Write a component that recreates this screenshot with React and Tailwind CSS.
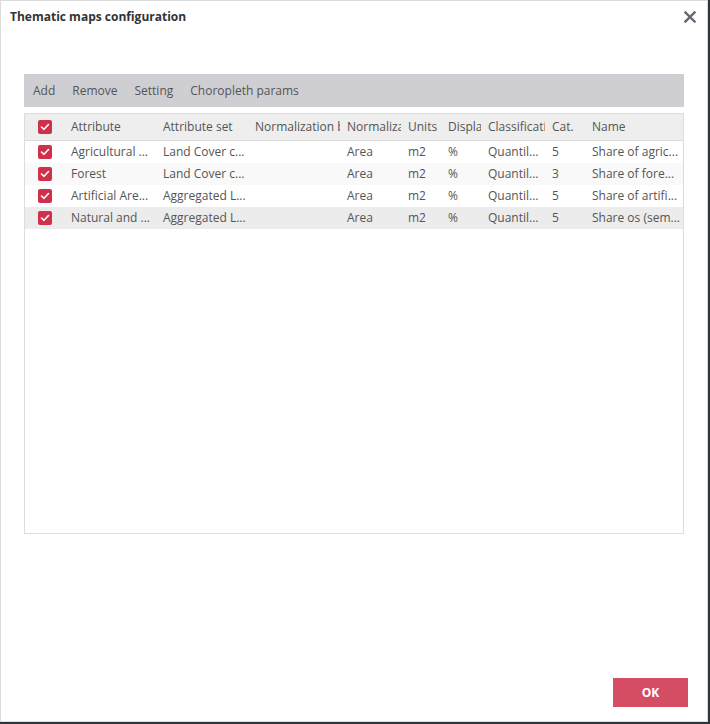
import React from "react";

const cols = [
  { label: "Attribute", w: "w-[92px]" },
  { label: "Attribute set", w: "w-[92px]" },
  { label: "Normalization by", w: "w-[92px]" },
  { label: "Normalization", w: "w-[61px]" },
  { label: "Units", w: "w-[40px]" },
  { label: "Display", w: "w-[40px]" },
  { label: "Classification", w: "w-[64px]" },
  { label: "Cat.", w: "w-[40px]" },
  { label: "Name", w: "w-[100px]" },
];

const rowBg = ["bg-white", "bg-[#f9f9f9]", "bg-white", "bg-[#ececec]"];

const disp = [
  ["Agricultural ...", "Land Cover c...", "", "Area", "m2", "%", "Quantil...", "5", "Share of agric..."],
  ["Forest", "Land Cover c...", "", "Area", "m2", "%", "Quantil...", "3", "Share of fore..."],
  ["Artificial Are...", "Aggregated L...", "", "Area", "m2", "%", "Quantil...", "5", "Share of artifi..."],
  ["Natural and ...", "Aggregated L...", "", "Area", "m2", "%", "Quantil...", "5", "Share os (sem..."],
];

function Check() {
  return (
    <div className="w-[39px] flex items-center justify-center shrink-0">
      <div className="w-[14px] h-[14px] rounded-[2px] bg-[#d0304a] flex items-center justify-center">
        <svg width="10" height="8" viewBox="0 0 10 8" fill="none">
          <path d="M1.5 4 L4 6.3 L8.5 1.5" stroke="white" strokeWidth="1.6" strokeLinecap="round" strokeLinejoin="round" />
        </svg>
      </div>
    </div>
  );
}

export default function App() {
  return (
    <div className="w-[710px] h-[724px] bg-[#2f3438] overflow-hidden" style={{ fontFamily: '"Open Sans", sans-serif' }}>
      <div className="w-[708px] h-[722px] bg-white border border-[#dcdcdc] flex flex-col">
        <div className="h-[32px] flex items-center justify-between pl-[9px] pr-[11px] shrink-0">
          <span className="text-[12px] font-bold text-[#333] leading-none">Thematic maps configuration</span>
          <svg width="12" height="12" viewBox="0 0 12 12">
            <path d="M1.5 1.5 L10.5 10.5 M10.5 1.5 L1.5 10.5" stroke="#666672" strokeWidth="2.4" strokeLinecap="square" />
          </svg>
        </div>
        <div className="flex-1 flex flex-col px-[23px] pt-[41px]">
          <div className="h-[33px] bg-[#cfcfd3] flex items-center gap-[17px] px-[9px] text-[12px] text-[#555] shrink-0">
            <span>Add</span>
            <span>Remove</span>
            <span>Setting</span>
            <span>Choropleth params</span>
          </div>
          <div className="mt-[6px] h-[421px] border border-[#dcdcdc] flex flex-col overflow-hidden">
            <div className="h-[27px] bg-[#eeeeee] border-b border-[#dcdcdc] flex items-center shrink-0">
              <Check />
              {cols.map((c, i) => (
                <div key={i} className={`${c.w} shrink-0 pl-[7px] text-[12px] text-[#555] whitespace-nowrap overflow-hidden`}>
                  {c.label}
                </div>
              ))}
            </div>
            {disp.map((r, ri) => (
              <div key={ri} className={`h-[22px] flex items-center ${rowBg[ri]} shrink-0`}>
                <Check />
                {r.map((t, i) => (
                  <div key={i} className={`${cols[i].w} shrink-0 pl-[7px] text-[12px] text-[#555] whitespace-nowrap overflow-hidden`}>
                    {t}
                  </div>
                ))}
              </div>
            ))}
          </div>
          <div className="flex-1 flex items-end justify-end pb-[14px]">
            <button className="w-[75px] h-[29px] bg-[#d44d62] text-white text-[12px] font-bold mr-[-4px]">OK</button>
          </div>
        </div>
      </div>
    </div>
  );
}
